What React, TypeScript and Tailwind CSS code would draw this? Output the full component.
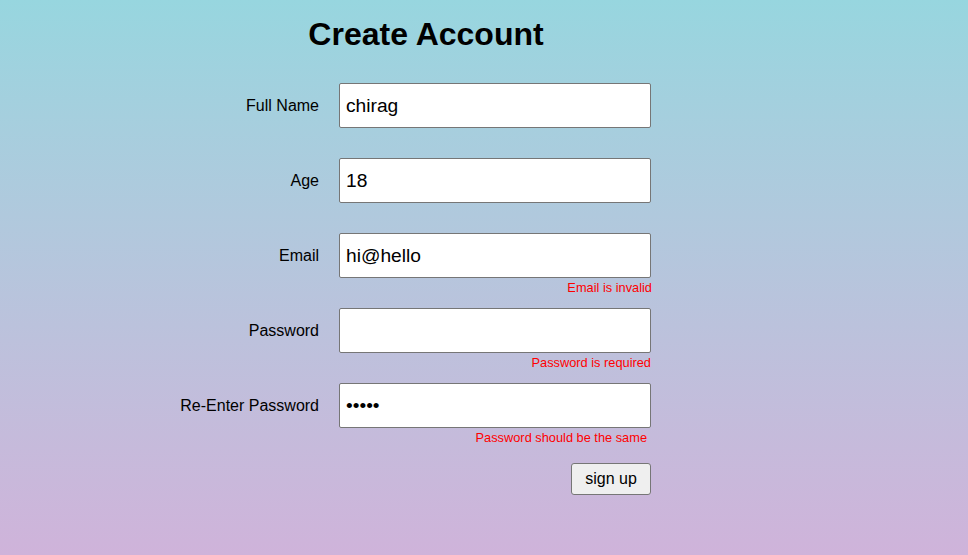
import React from "react";

interface Field {
  label: string;
  type: string;
  value: string;
  error?: string;
  errorShift?: string;
}

const FIELDS: Field[] = [
  { label: "Full Name", type: "text", value: "chirag" },
  { label: "Age", type: "text", value: "18" },
  { label: "Email", type: "text", value: "hi@hello", error: "Email is invalid", errorShift: "mr-[-1px]" },
  { label: "Password", type: "password", value: "", error: "Password is required", errorShift: "mr-0" },
  { label: "Re-Enter Password", type: "password", value: "12345", error: "Password should be the same", errorShift: "mr-[4px]" },
];

export default function App() {
  return (
    <div
      className="min-h-[555px] h-screen w-full bg-gradient-to-b from-[#97d6df] to-[#cfb3da] text-black"
      style={{ fontFamily: '"Liberation Sans", Arial, sans-serif' }}
    >
      <div className="ml-[169px] w-[514px] pt-[16px]">
        <h1 className="text-center text-[32px] font-bold leading-[37px]">Create Account</h1>

        <form className="mt-[30px] flex flex-col" onSubmit={(e) => e.preventDefault()}>
          {FIELDS.map((f) => (
            <div key={f.label} className="flex h-[75px]">
              <label className="flex h-[45px] w-[170px] items-center justify-end pr-5 text-[16px]">
                {f.label}
              </label>
              <div className="flex w-[312px] flex-col">
                <input
                  type={f.type}
                  defaultValue={f.value}
                  className="h-[45px] w-[312px] rounded-[2px] border border-[#767676] bg-white px-[6px] text-[19.2px] outline-none"
                />
                {f.error && (
                  <span className={`mt-[2px] text-right text-[12.8px] leading-[15px] text-[#ff0000] ${f.errorShift}`}>
                    {f.error}
                  </span>
                )}
              </div>
            </div>
          ))}

          <div className="mt-[5px] flex w-[482px] justify-end">
            <button
              type="submit"
              className="h-[32px] w-[80px] rounded-[3px] border border-[#767676] bg-[#efefef] text-[16px]"
            >
              sign up
            </button>
          </div>
        </form>
      </div>
    </div>
  );
}
